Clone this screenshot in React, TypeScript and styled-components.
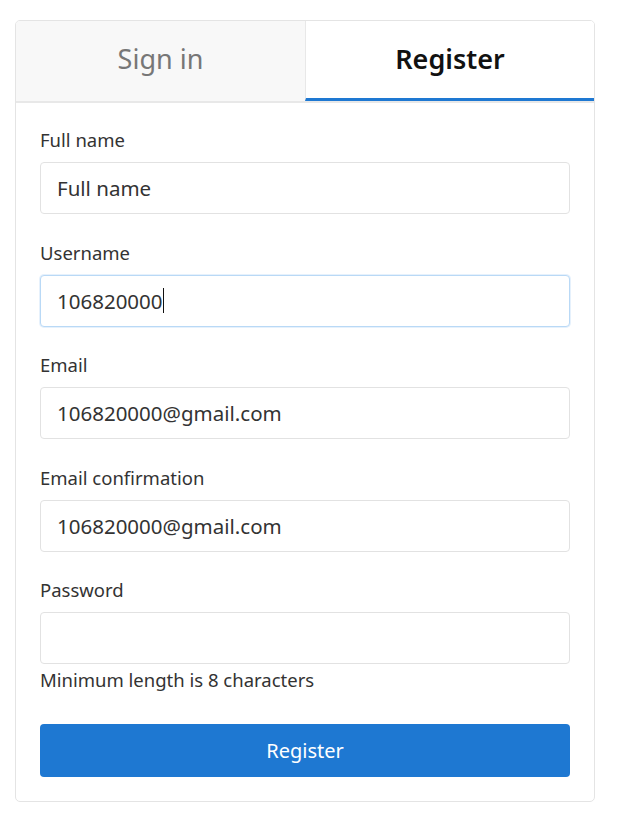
import { createGlobalStyle } from "styled-components";
import styled from "styled-components";

const GlobalStyle = createGlobalStyle`
  html, body {
    margin: 0;
    padding: 0;
    background: #ffffff;
  }
  body {
    font-family: "Noto Sans", "Open Sans", "Liberation Sans", sans-serif;
    color: #333333;
  }
`;

const Page = styled.div`
  padding: 20px 27px 26px 15px;
`;

const Card = styled.div`
  width: 578px;
  border: 1px solid #e4e4e4;
  border-radius: 5px;
  overflow: hidden;
  background: #ffffff;
`;

const Tabs = styled.div`
  display: grid;
  grid-template-columns: 1fr 1fr;
  border-bottom: 2px solid #e8e8e8;
`;

const Tab = styled.button<{ $active?: boolean }>`
  height: 80px;
  border: none;
  border-left: ${(p) => (p.$active ? "1px solid #e8e8e8" : "none")};
  border-bottom: 3px solid ${(p) => (p.$active ? "#1e78d2" : "transparent")};
  background: ${(p) => (p.$active ? "#ffffff" : "#f8f8f8")};
  color: ${(p) => (p.$active ? "#111111" : "#777777")};
  font-family: inherit;
  font-size: 27px;
  font-weight: ${(p) => (p.$active ? 600 : 400)};
  padding: 0 0 2px;
  cursor: pointer;
`;

const Body = styled.form`
  display: flex;
  flex-direction: column;
  padding: 26px 24px 24px 24px;
`;

const Group = styled.div`
  display: flex;
  flex-direction: column;
  margin-bottom: 27.5px;
`;

const Label = styled.label`
  font-size: 18.5px;
  line-height: 22px;
  color: #333333;
  margin-bottom: 11px;
`;

const fieldBox = `
  box-sizing: border-box;
  height: 52px;
  width: 100%;
  padding: 0 16px;
  border-radius: 4px;
  font-size: 20.5px;
  color: #333333;
  background: #ffffff;
`;

const Input = styled.input`
  ${fieldBox}
  border: 1px solid #e2e2e2;
  font-family: inherit;
  outline: none;
  &::placeholder {
    color: #333333;
  }
`;

// the focused username field, shown with its text caret
const FocusedField = styled.div`
  ${fieldBox}
  display: flex;
  align-items: center;
  border: 1px solid #b9d9f6;
  box-shadow: 0 0 0 1px #e6f1fc;
`;

const Caret = styled.span`
  display: inline-block;
  width: 1px;
  height: 25px;
  background: #111111;
`;

const Help = styled.div`
  font-size: 18.5px;
  line-height: 22px;
  color: #333333;
  margin-top: 5px;
`;

const SubmitButton = styled.button`
  margin-top: 5px;
  height: 53px;
  border: none;
  border-radius: 4px;
  background: #1e78d2;
  color: #ffffff;
  font-family: inherit;
  font-size: 20px;
  cursor: pointer;
`;

export default function App() {
  return (
    <>
      <GlobalStyle />
      <Page>
        <Card>
          <Tabs>
            <Tab type="button">Sign in</Tab>
            <Tab type="button" $active>
              Register
            </Tab>
          </Tabs>
          <Body onSubmit={(e) => e.preventDefault()}>
            <Group>
              <Label>Full name</Label>
              <Input placeholder="Full name" />
            </Group>
            <Group>
              <Label>Username</Label>
              <FocusedField>
                106820000
                <Caret />
              </FocusedField>
            </Group>
            <Group>
              <Label>Email</Label>
              <Input defaultValue="106820000@gmail.com" />
            </Group>
            <Group>
              <Label>Email confirmation</Label>
              <Input defaultValue="106820000@gmail.com" />
            </Group>
            <Group>
              <Label>Password</Label>
              <Input type="password" />
              <Help>Minimum length is 8 characters</Help>
            </Group>
            <SubmitButton type="submit">Register</SubmitButton>
          </Body>
        </Card>
      </Page>
    </>
  );
}
